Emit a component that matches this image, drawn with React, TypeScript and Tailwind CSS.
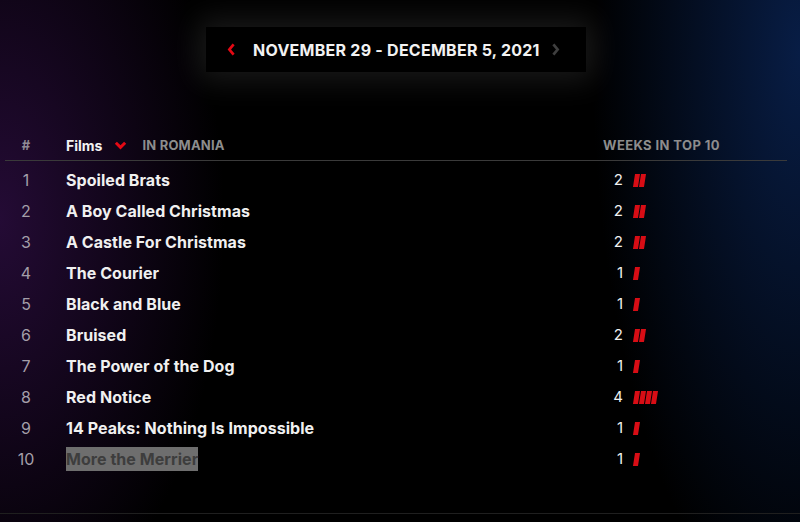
import React from 'react';

type Row = { rank: number; title: string; weeks: number; selected?: boolean };

const rows: Row[] = [
  { rank: 1, title: 'Spoiled Brats', weeks: 2 },
  { rank: 2, title: 'A Boy Called Christmas', weeks: 2 },
  { rank: 3, title: 'A Castle For Christmas', weeks: 2 },
  { rank: 4, title: 'The Courier', weeks: 1 },
  { rank: 5, title: 'Black and Blue', weeks: 1 },
  { rank: 6, title: 'Bruised', weeks: 2 },
  { rank: 7, title: 'The Power of the Dog', weeks: 1 },
  { rank: 8, title: 'Red Notice', weeks: 4 },
  { rank: 9, title: '14 Peaks: Nothing Is Impossible', weeks: 1 },
  { rank: 10, title: 'More the Merrier', weeks: 1, selected: true },
];

const Chevron = ({ dir, color }: { dir: 'left' | 'right' | 'down'; color: string }) => {
  const d =
    dir === 'left'
      ? 'M9 2 L4 8 L9 14'
      : dir === 'right'
      ? 'M4 2 L9 8 L4 14'
      : 'M2 4 L7 9 L12 4';
  const box = dir === 'down' ? '0 0 14 14' : '0 0 13 16';
  return (
    <svg viewBox={box} className={dir === 'down' ? 'w-[13px] h-[13px]' : 'w-[11px] h-[15px]'}>
      <path d={d} fill="none" stroke={color} strokeWidth={3.2} strokeLinejoin="miter" />
    </svg>
  );
};

const WeekBars = ({ count }: { count: number }) => (
  <div className="flex gap-[1.5px]">
    {Array.from({ length: count }).map((_, i) => (
      <span key={i} className="block w-[4.5px] h-[13px] bg-[#d80d15] -skew-x-[9deg]" />
    ))}
  </div>
);

export default function App() {
  return (
    <div
      className="relative w-full h-[522px] overflow-hidden bg-black text-white bg-[radial-gradient(ellipse_28%_80%_at_0%_42%,#240b35_0%,rgba(0,0,0,0)_100%),radial-gradient(ellipse_26%_110%_at_100%_10%,#081d45_0%,rgba(0,0,0,0)_100%)]"
      style={{ fontFamily: 'Inter, "Liberation Sans", sans-serif' }}
    >
      <div className="flex justify-center pt-[27px] pr-[8px]">
        <div className="flex items-center h-[45px] w-[380px] bg-black shadow-[0_0_30px_8px_rgba(255,255,255,0.1)]">
          <div className="ml-[20px] mr-[16px] flex items-center">
            <Chevron dir="left" color="#e50914" />
          </div>
          <span className="text-[16px] font-bold tracking-[0.25px] text-[#f2f2f2]">NOVEMBER 29 - DECEMBER 5, 2021</span>
          <div className="ml-[10px] flex items-center">
            <Chevron dir="right" color="#3f3f3f" />
          </div>
        </div>
      </div>

      <div className="mt-[59px] mx-[5px] mr-[13px]">
        <div className="flex items-center h-[30px] border-b border-[#3a3a3a] font-bold">
          <div className="w-[42px] text-center text-[13px] text-[#8f8a94]">#</div>
          <div className="ml-[19px] flex items-center flex-1">
            <span className="text-[14px] text-[#f2f2f2]">Films</span>
            <span className="ml-[12px] flex items-center">
              <Chevron dir="down" color="#e50914" />
            </span>
            <span className="ml-[15px] text-[13px] text-[#8d8d8d] tracking-[0.2px]">IN ROMANIA</span>
          </div>
          <div className="w-[184px] text-[13px] text-[#8d8d8d] tracking-[0.4px]">WEEKS IN TOP 10</div>
        </div>

        <div className="pt-[3px]">
          {rows.map((r) => (
            <div key={r.rank} className="flex items-center h-[31px]">
              <div className="w-[42px] text-center text-[16px] text-[#a49fa9] pt-[1px]">{r.rank}</div>
              <div className="ml-[19px] flex-1">
                <span
                  className={
                    r.selected
                      ? 'text-[16px] font-bold tracking-[0.05px] bg-[#6e6e6e] text-[#3d3d3d] py-[2px]'
                      : 'text-[16px] font-bold tracking-[0.05px] text-[#f0f0f0]'
                  }
                >
                  {r.title}
                </span>
              </div>
              <div className="w-[184px] flex items-center pt-[2px]">
                <span className="w-[20px] text-right text-[15px] text-[#f0f0f0]">{r.weeks}</span>
                <span className="ml-[11px]">
                  <WeekBars count={r.weeks} />
                </span>
              </div>
            </div>
          ))}
        </div>
      </div>

      <div className="absolute left-0 right-0 bottom-[8px] h-px bg-[#1f1f1f]" />
    </div>
  );
}
